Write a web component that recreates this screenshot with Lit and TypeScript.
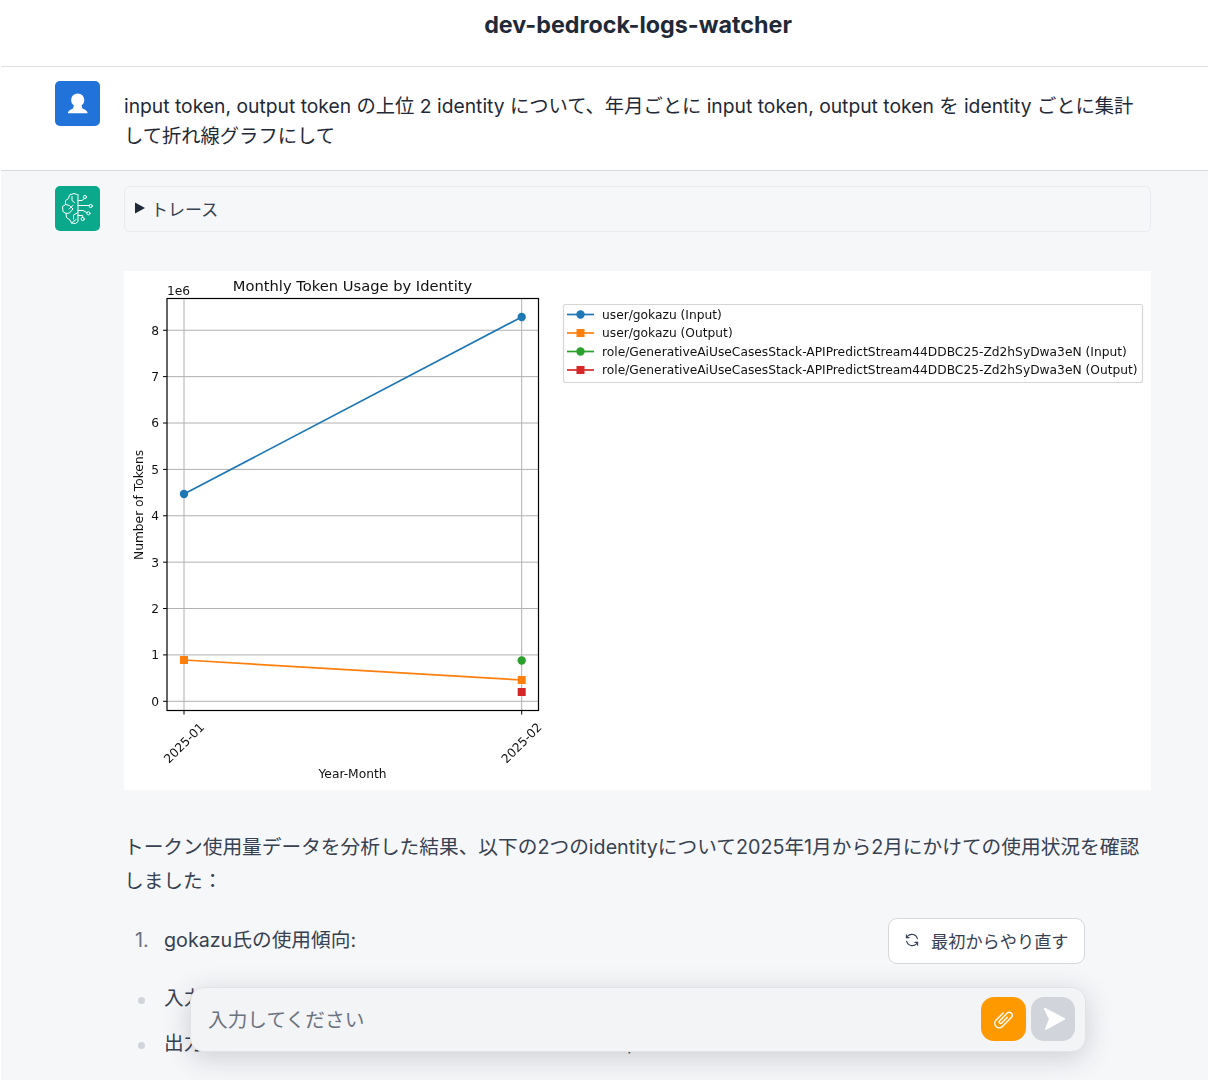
import { LitElement, html, css, svg } from "lit";
import { customElement } from "lit/decorators.js";

const Y = (v: number) => 701.3 - v * 46.38;
const X0 = 184;
const X1 = 521.7;
const LEFT = 167;
const RIGHT = 538.5;
const TOP = 298.5;
const BOTTOM = 710.5;
const C = { blue: "#1f77b4", orange: "#ff7f0e", green: "#2ca02c", red: "#d62728" };

const legend = [
  { t: "user/gokazu (Input)", c: C.blue, round: true },
  { t: "user/gokazu (Output)", c: C.orange, round: false },
  { t: "role/GenerativeAiUseCasesStack-APIPredictStream44DDBC25-Zd2hSyDwa3eN (Input)", c: C.green, round: true },
  { t: "role/GenerativeAiUseCasesStack-APIPredictStream44DDBC25-Zd2hSyDwa3eN (Output)", c: C.red, round: false },
];

function chart() {
  const ticks = [0, 1, 2, 3, 4, 5, 6, 7, 8];
  return html`<svg class="chart" viewBox="124 271 1027 519" width="1027" height="519">
    <rect x="124" y="271" width="1027" height="519" fill="#fff"></rect>
    ${ticks.map(
      (v) => svg`
      <line x1=${LEFT} x2=${RIGHT} y1=${Y(v)} y2=${Y(v)} stroke="#b0b0b0" stroke-width="1"></line>
      <line x1=${LEFT - 4} x2=${LEFT} y1=${Y(v)} y2=${Y(v)} stroke="#000" stroke-width="1"></line>
      <text x=${LEFT - 8} y=${Y(v) + 4.4} text-anchor="end" class="tick">${v}</text>`
    )}
    ${[X0, X1].map(
      (x) => svg`
      <line x1=${x} x2=${x} y1=${TOP} y2=${BOTTOM} stroke="#b0b0b0" stroke-width="1"></line>
      <line x1=${x} x2=${x} y1=${BOTTOM} y2=${BOTTOM + 4} stroke="#000" stroke-width="1"></line>`
    )}
    <rect x=${LEFT} y=${TOP} width=${RIGHT - LEFT} height=${BOTTOM - TOP} fill="none" stroke="#000" stroke-width="1.2"></rect>
    <line x1=${X0} y1="494" x2=${X1} y2="317" stroke=${C.blue} stroke-width="1.7"></line>
    <circle cx=${X0} cy="494" r="4.2" fill=${C.blue}></circle>
    <circle cx=${X1} cy="317" r="4.2" fill=${C.blue}></circle>
    <line x1=${X0} y1="660" x2=${X1} y2="680" stroke=${C.orange} stroke-width="1.7"></line>
    <rect x=${X0 - 4} y="656" width="8" height="8" fill=${C.orange}></rect>
    <rect x=${X1 - 4} y="676" width="8" height="8" fill=${C.orange}></rect>
    <circle cx=${X1} cy="660.5" r="4.2" fill=${C.green}></circle>
    <rect x=${X1 - 4} y="688" width="8" height="8" fill=${C.red}></rect>

    <text x="167" y="295" class="tick">1e6</text>
    <text x="352.5" y="291" text-anchor="middle" class="title">Monthly Token Usage by Identity</text>
    <text x="352.5" y="778" text-anchor="middle" class="tick">Year-Month</text>
    <text transform="translate(143 505) rotate(-90)" text-anchor="middle" class="tick">Number of Tokens</text>
    <text transform="translate(187 746) rotate(-45)" text-anchor="middle" class="tick">2025-01</text>
    <text transform="translate(524.5 746) rotate(-45)" text-anchor="middle" class="tick">2025-02</text>

    <rect x="563.5" y="304.5" width="579" height="78" rx="2" fill="#fff" stroke="#d6d6d6" stroke-width="1.2"></rect>
    ${legend.map((l, i) => {
      const y = 314.5 + i * 18.5;
      return svg`
        <line x1="567" x2="594" y1=${y} y2=${y} stroke=${l.c} stroke-width="1.7"></line>
        ${l.round
          ? svg`<circle cx="580.5" cy=${y} r="4.2" fill=${l.c}></circle>`
          : svg`<rect x="576.5" y=${y - 4} width="8" height="8" fill=${l.c}></rect>`}
        <text x="602" y=${y + 4.4} class="tick">${l.t}</text>`;
    })}
  </svg>`;
}

@customElement("app-root")
export class AppRoot extends LitElement {
  static styles = css`
    :host {
      display: block;
      position: relative;
      width: 1208px;
      height: 1080px;
      overflow: hidden;
      background: #fff;
      font-family: Inter, "Noto Sans CJK JP", "Liberation Sans", sans-serif;
      color: #1f2937;
    }
    .page { margin-left: 1px; }
    .header {
      height: 67px;
      box-sizing: border-box;
      padding: 9px 0 0 67px;
      text-align: center;
      font-size: 23.3px;
      font-weight: 700;
      line-height: 32px;
      color: #1f2937;
      border-bottom: 1px solid #e1e1e8;
    }
    .row {
      display: flex;
      gap: 24px;
      padding-left: 54px;
    }
    .user {
      height: 104px;
      box-sizing: border-box;
      padding-top: 14px;
      border-bottom: 1px solid #d9dae0;
    }
    .ai {
      background: #f6f7f9;
      padding-top: 15px;
      height: 920px;
      box-sizing: border-box;
    }
    .avatar {
      flex: none;
      width: 45px;
      height: 45px;
      border-radius: 5px;
      display: block;
    }
    .avatar.u { background: #2273d9; }
    .avatar.a { background: #0aa98c; }
    .question {
      width: 1027px;
      padding-top: 11px;
      font-size: 19.3px;
      line-height: 29.5px;
      color: #1f2937;
    }
    .body { width: 1027px; }
    .trace {
      box-sizing: border-box;
      height: 46px;
      border: 1px solid #e9ebef;
      border-radius: 5px;
      display: flex;
      align-items: center;
      gap: 6px;
      padding: 0 0 2px 10px;
      font-size: 17px;
      color: #374151;
    }
    .chart {
      display: block;
      margin-top: 39px;
      filter: blur(0.35px);
    }
    .chart text { font-family: "DejaVu Sans", sans-serif; fill: #111; }
    .chart .tick { font-size: 12.25px; }
    .chart .title { font-size: 14.7px; }
    .prose {
      font-size: 19.7px;
      line-height: 34px;
      color: #374151;
    }
    .prose p { margin: 40px 0 0; }
    .num {
      display: flex;
      margin-top: 25px;
    }
    .num .m { width: 40px; padding-left: 11px; box-sizing: border-box; color: #6b7280; }
    .bullets {
      list-style: none;
      margin: 26px 0 0;
      padding: 0;
    }
    .bullets li {
      display: flex;
      align-items: center;
      height: 34px;
      margin-bottom: 11px;
      white-space: nowrap;
    }
    .bullets li span { margin-bottom: 4px; }
    .bullets li::before {
      content: "";
      flex: none;
      width: 7px;
      height: 7px;
      border-radius: 50%;
      background: #d1d5db;
      margin: 0 19px 0 14px;
    }
    .reset {
      position: absolute;
      left: 888px;
      top: 918px;
      width: 197px;
      height: 46px;
      box-sizing: border-box;
      background: #fff;
      border: 1px solid #d6d8dd;
      border-radius: 9px;
      display: flex;
      align-items: center;
      gap: 11px;
      padding: 0 0 2px 15px;
      font-size: 17.2px;
      color: #374151;
    }
    .composer {
      position: absolute;
      left: 190px;
      top: 987px;
      width: 896px;
      height: 65px;
      box-sizing: border-box;
      background: #f3f4f6;
      border: 1px solid #e1e3e7;
      border-radius: 14px;
      box-shadow: 0 6px 28px rgba(40, 44, 60, 0.2);
      display: flex;
      align-items: center;
      padding: 0 10px 2px 17px;
      gap: 5px;
    }
    .placeholder {
      flex: 1;
      font-size: 19.7px;
      color: #6b7280;
    }
    .btn {
      flex: none;
      width: 44px;
      height: 44px;
      border-radius: 13px;
      display: flex;
      align-items: center;
      justify-content: center;
    }
    .btn.clip { background: #ff9900; width: 45px; }
    .btn.send { background: #d1d5db; }
  `;

  render() {
    return html`
      <div class="page">
        <div class="header">dev-bedrock-logs-watcher</div>
        <div class="row user">
          <svg class="avatar u" viewBox="0 0 45 45">
            <circle cx="22.7" cy="19" r="6.6" fill="#fff"></circle>
            <path d="M12.8 32.2 Q13.3 29.4 18 27.6 L19 24 H26.4 L27.4 27.6 Q32.2 29.4 32.7 32.2 Z" fill="#fff"></path>
          </svg>
          <div class="question">
            input token, output token の上位 2 identity について、年月ごとに input token, output token を identity ごとに集計して折れ線グラフにして
          </div>
        </div>
        <div class="row ai">
          <svg class="avatar a" viewBox="0 0 45 45" fill="none" stroke="#fff" stroke-width="1" stroke-linejoin="round" stroke-linecap="round">
            <path d="M22 8.5 L19 7.5 L14.5 9 L13.5 12.5 L10.5 14.5 L10.5 18.5 L7.5 20.5 L8 25.5 L11 27.5 L11.5 31.5 L15 34 L16.5 37 L20.5 37.5 L23 35.5 V8.5"></path>
            <path d="M17 10.5 V14.5 L19.5 16.5 M10.5 18.5 L14.5 19.5 L18 23 L14.5 27 L11 27.5 M14 23 L18 19.5 M23 26.5 L18.5 29 V33 M16.5 37 L21 33.5"></path>
            <path d="M23 14.5 H27 L29.7 12.2 M23 19.5 H34 M23 24.5 H28 L32 26.6 M23 29.5 H27.7 V31.5"></path>
            <circle cx="29.9" cy="11" r="1.6"></circle>
            <circle cx="35.7" cy="20" r="1.6"></circle>
            <circle cx="33.4" cy="27.3" r="1.6"></circle>
            <circle cx="27.7" cy="33" r="1.6"></circle>
          </svg>
          <div class="body">
            <div class="trace">
              <svg width="10" height="12" viewBox="0 0 10 12"><path d="M0 0.5 L10 6 L0 11.5 Z" fill="#1f2937"></path></svg>
              <span>トレース</span>
            </div>
            ${chart()}
            <div class="prose">
              <p>トークン使用量データを分析した結果、以下の2つのidentityについて2025年1月から2月にかけての使用状況を確認しました：</p>
              <div class="num"><span class="m">1.</span><span>gokazu氏の使用傾向:</span></div>
              <ul class="bullets">
                <li><span>入力トークン</span></li>
                <li><span>出力トークン: 1月の約90万トークンから2月の約457,000トークンへ減少</span></li>
              </ul>
            </div>
          </div>
        </div>
      </div>
      <div class="reset">
        <svg width="16" height="16" viewBox="0 0 16 16" fill="none" stroke="#374151" stroke-width="1.1" stroke-linecap="round" stroke-linejoin="round">
          <path d="M13.4 6.6 A5.8 5.8 0 0 0 3.6 4.2 L2.4 5.6"></path>
          <path d="M2.4 2.8 V5.6 H5.1"></path>
          <path d="M2.6 9.4 A5.8 5.8 0 0 0 12.4 11.8 L13.6 10.4"></path>
          <path d="M13.6 13.2 V10.4 H10.9"></path>
        </svg>
        <span>最初からやり直す</span>
      </div>
      <div class="composer">
        <div class="placeholder">入力してください</div>
        <div class="btn clip">
          <svg width="24" height="24" viewBox="0 0 24 24" fill="none" stroke="#fff" stroke-width="1.4" stroke-linecap="round" stroke-linejoin="round">
            <path transform="rotate(45 11.5 12)" d="M7 8 V18 a4.5 4.5 0 0 0 9 0 V5.5 a3 3 0 0 0 -6 0 V16 a1.5 1.5 0 0 0 3 0 V8"></path>
          </svg>
        </div>
        <div class="btn send">
          <svg width="44" height="44" viewBox="0 0 44 44">
            <path d="M14 12 L33 22 L15 32 L19 22 Z" fill="#fff" stroke="#fff" stroke-width="2" stroke-linejoin="round"></path>
          </svg>
        </div>
      </div>
    `;
  }
}
